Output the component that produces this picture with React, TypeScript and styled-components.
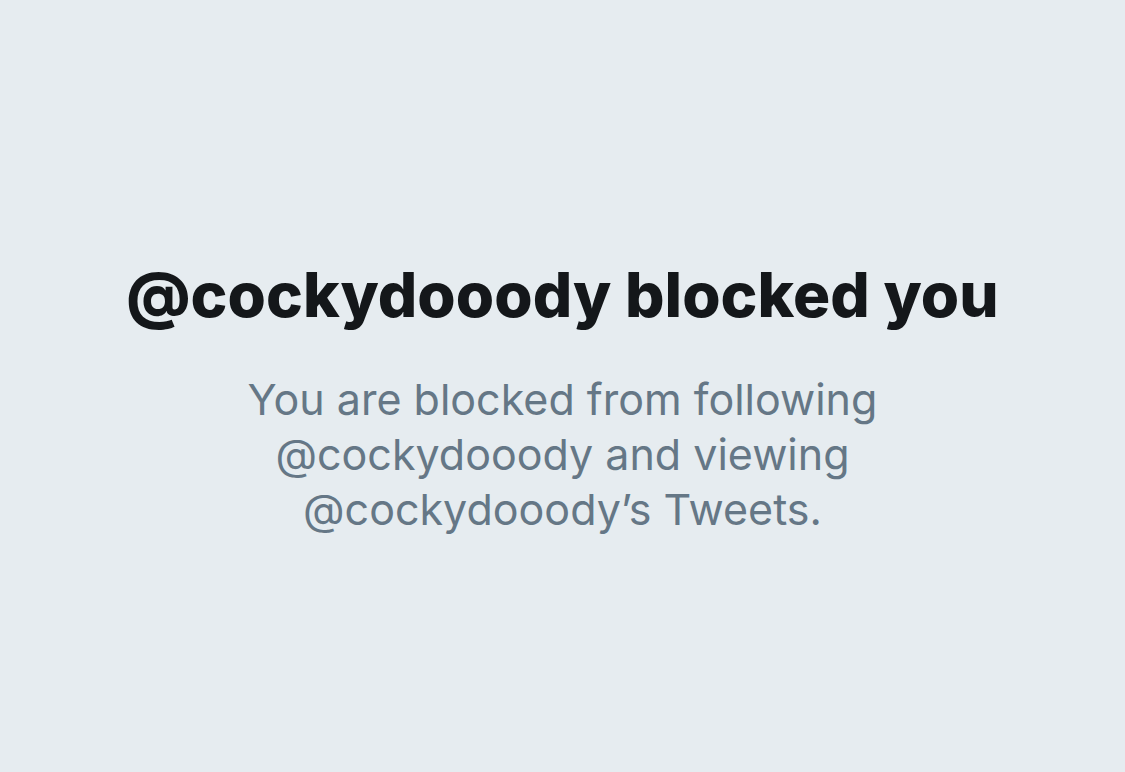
import React from 'react'
import styled, { createGlobalStyle } from 'styled-components'

const GlobalStyle = createGlobalStyle`
  html, body {
    margin: 0;
    padding: 0;
    background: #e6ecf0;
  }
  #root {
    min-height: 100vh;
  }
`

const Page = styled.main`
  min-height: 100vh;
  display: flex;
  flex-direction: column;
  align-items: center;
  justify-content: center;
  padding-top: 23px;
  box-sizing: border-box;
  font-family: Inter, "Noto Sans", sans-serif;
  text-align: center;
`

const Title = styled.h1`
  margin: 0;
  font-size: 62px;
  font-weight: 800;
  letter-spacing: 0.05px;
  line-height: 72px;
  color: #14171a;
`

const Message = styled.p`
  margin: 41px 0 0;
  font-size: 43px;
  font-weight: 400;
  line-height: 55px;
  color: #657786;
  max-width: 680px;
`

export default function App() {
  const handle = 'cockydooody'

  return (
    <>
      <GlobalStyle />
      <Page>
        <Title>{`@${handle} blocked you`}</Title>
        <Message>
          {`You are blocked from following @${handle} and viewing @${handle}’s Tweets.`}
        </Message>
      </Page>
    </>
  )
}
